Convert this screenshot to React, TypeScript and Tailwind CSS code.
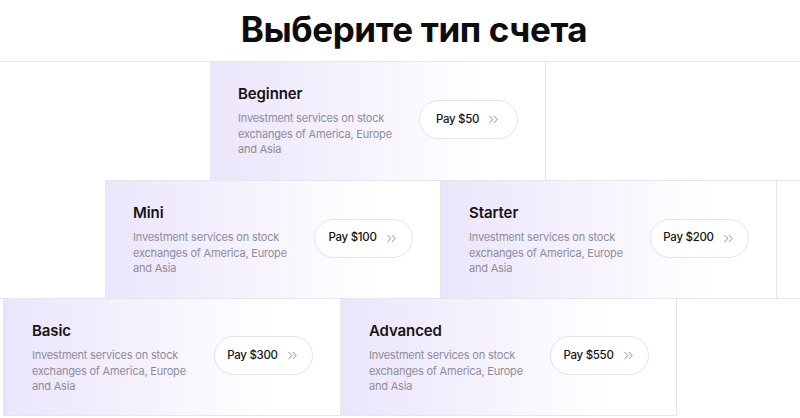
import React from "react";
import { ChevronsRight } from "lucide-react";

interface Plan {
	name: string;
	price: number;
}

function PlanCard({ plan, className = "" }: { plan: Plan; className?: string }) {
	return (
		<div
			className={`w-[336px] h-[117px] shrink-0 flex items-center justify-between pl-[28px] pr-[27px] bg-linear-to-r from-[#ebe5fb] via-[#f6f3fd] via-[45%] to-white to-[80%] border-[#e6e6ea] ${className}`}
		>
			<div className="flex flex-col self-start pt-[23px]">
				<h2 className="text-[15px] leading-[18px] font-semibold text-[#141414] tracking-[-0.1px]">{plan.name}</h2>
				<p className="mt-[8px] w-[160px] text-[11px] leading-[15.5px] tracking-[-0.2px] text-[#8e8c99]">
					Investment services on stock exchanges of America, Europe and Asia
				</p>
			</div>
			<button className="mb-[3px] w-[99px] h-[39px] rounded-full border border-[#e4e4e8] bg-white flex items-center justify-center gap-[7px] text-[11.5px] font-medium tracking-[-0.3px] text-[#151515]">
				<span>Pay ${plan.price}</span>
				<ChevronsRight size={15} strokeWidth={1.2} className="text-[#666]" />
			</button>
		</div>
	);
}

export default function App() {
	return (
		<div className="w-[800px] h-[418px] overflow-hidden bg-white font-['Inter',sans-serif]">
			<div className="h-[61px] flex items-center justify-center pl-[28px]">
				<h1 className="text-[35px] font-bold tracking-[-0.4px] text-[#0d0d0d] leading-none pb-[3px]">
					Выберите тип счета
				</h1>
			</div>

			<div className="flex border-t border-[#e6e6ea] pl-[210px]">
				<PlanCard plan={{ name: "Beginner", price: 50 }} className="border-r h-[118px]" />
			</div>

			<div className="flex ml-[105px] border-t border-[#e6e6ea]">
				<PlanCard plan={{ name: "Mini", price: 100 }} className="border-r" />
				<PlanCard plan={{ name: "Starter", price: 200 }} className="border-r" />
			</div>

			<div className="flex border-t border-[#e6e6ea] pl-[3px]">
				<PlanCard plan={{ name: "Basic", price: 300 }} className="border-l border-r border-b w-[338px]" />
				<PlanCard plan={{ name: "Advanced", price: 550 }} className="border-r border-b" />
			</div>
		</div>
	);
}
